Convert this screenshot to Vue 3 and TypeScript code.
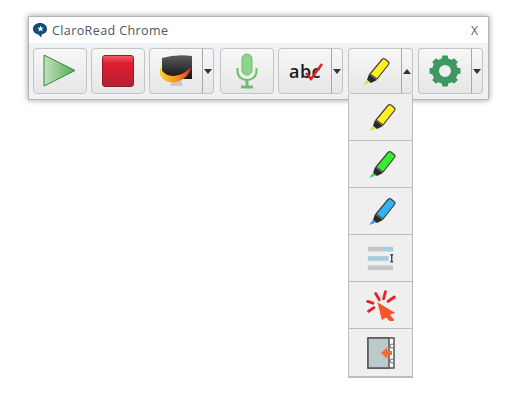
<script setup lang="ts">
const markers = [
  { id: 'y', body: '#ffee22', tip: '#e8dc30' },
  { id: 'g', body: '#33ee33', tip: '#44cc66' },
  { id: 'b', body: '#2db4f6', tip: '#2f9fe0' },
]
const gearTeeth = [0, 45, 90, 135, 180, 225, 270, 315]
const rays = [
  'M11 16 L17 18', 'M12 27 L18 23', 'M20 7 L24 14', 'M31 5 L29 13', 'M41 11 L34 16',
]
</script>

<template>
  <div class="page">
    <div class="panel">
      <div class="title">
        <svg class="logo" width="16" height="16" viewBox="0 0 16 16">
          <path d="M8 1 C12 1 15 3.500 15 7 C15 10 12.500 12 10 12 L9 15.500 L6.500 12.500 C3.500 12 1 10 1 7 C1 3.500 4 1 8 1Z" fill="#0d4f78" />
          <path d="M8.500 3.500 L9.400 5.700 L11.700 5.800 L9.900 7.200 L10.500 9.400 L8.500 8.200 L6.500 9.400 L7.100 7.200 L5.300 5.800 L7.600 5.700Z" fill="#fff" />
        </svg>
        <span class="name">ClaroRead Chrome</span>
        <span class="close">X</span>
      </div>
      <div class="bar">
        <button class="btn plain first">
          <svg width="36" height="36" viewBox="0 0 36 36">
            <defs>
              <linearGradient id="pl" x1="0" y1="0" x2="1" y2="0">
                <stop offset="0" stop-color="#c6e0c0" /><stop offset="1" stop-color="#4fae55" />
              </linearGradient>
            </defs>
            <path d="M2 2 L33 17.500 L2 33Z" fill="url(#pl)" stroke="#2f8a3c" stroke-width="1" />
          </svg>
        </button>
        <button class="btn plain stop-btn">
          <span class="stop"></span>
        </button>
        <div class="split screen-split">
          <button class="btn main">
            <svg width="34" height="34" viewBox="0 0 34 34">
              <defs>
                <linearGradient id="sw" x1="0" y1="0" x2="1" y2="0">
                  <stop offset="0" stop-color="#f6d22c" /><stop offset=".6" stop-color="#f58a1f" /><stop offset="1" stop-color="#d8321c" />
                </linearGradient>
                <linearGradient id="sc" x1="0" y1="0" x2="0" y2="1">
                  <stop offset="0" stop-color="#5c5c5c" /><stop offset="1" stop-color="#111" />
                </linearGradient>
              </defs>
              <path d="M11 32 h13 l-2 -6 h-9z" fill="#c8c8c8" />
              <path d="M3 4 Q17 0 33 2 V25 H9 L3 20Z" fill="url(#sc)" />
              <path d="M1 12 C4 24 20 26 32 13 C29 29 8 34 1 21Z" fill="url(#sw)" />
            </svg>
          </button>
          <button class="btn arrow"><i class="down"></i></button>
        </div>
        <button class="btn plain mic-btn">
          <svg width="24" height="38" viewBox="0 0 24 38">
            <rect x="7" y="2" width="10" height="21" rx="5" fill="#8ed48a" stroke="#6cbc6a" />
            <path d="M2.500 16 V19 C2.500 25 7 28 12 28 C17 28 21.500 25 21.500 19 V16" fill="none" stroke="#6cc06c" stroke-width="2" />
            <path d="M12 28 V34" stroke="#6cc06c" stroke-width="3" />
            <path d="M6 35 H18" stroke="#6cc06c" stroke-width="3" />
          </svg>
        </button>
        <div class="split abc-split">
          <button class="btn main abc">
            <span class="abc-text">abc</span>
            <svg class="tick" width="20" height="20" viewBox="0 0 20 20">
              <path d="M2 11 L7 17 L18 2" fill="none" stroke="#d8232f" stroke-width="2.500" />
            </svg>
          </button>
          <button class="btn arrow"><i class="down"></i></button>
        </div>
        <div class="split hl-split">
          <button class="btn main">
            <svg width="30" height="30" viewBox="0 0 30 30">
              <path d="M10 18 L22 3.500 Q23.500 2 25 3 L28.500 6 Q29.500 7 28.500 8.500 L17 23Z" fill="#ffee22" stroke="#44423a" stroke-width="1.200" />
              <path d="M9 18 L17 24 L11 27 L7 24Z" fill="#2a2a2a" />
              <path d="M7 24 L10 26.500 L3 29Z" fill="#e8dc30" />
            </svg>
          </button>
          <button class="btn arrow"><i class="up"></i></button>
          <div class="menu">
            <div v-for="m in markers" :key="m.id" class="item">
              <svg width="30" height="30" viewBox="0 0 30 30">
                <path d="M10 18 L22 3.500 Q23.500 2 25 3 L28.500 6 Q29.500 7 28.500 8.500 L17 23Z" :fill="m.body" stroke="#44423a" stroke-width="1.200" />
                <path d="M9 18 L17 24 L11 27 L7 24Z" fill="#2a2a2a" />
                <path d="M7 24 L10 26.500 L3 29Z" :fill="m.tip" />
              </svg>
            </div>
            <div class="item">
              <svg width="28" height="26" viewBox="0 0 30 26">
                <rect x="1" y="1" width="14" height="5" fill="#c6c6c6" />
                <rect x="15" y="1" width="13" height="5" fill="#a4cde2" />
                <rect x="1" y="11" width="22" height="5" fill="#a4cde2" />
                <rect x="1" y="21" width="27" height="5" fill="#c6c6c6" />
                <path d="M25 9.500 H28 M26.500 9.500 V17 M25 17 H28" stroke="#444" stroke-width="1.500" fill="none" />
              </svg>
            </div>
            <div class="item">
              <svg width="32" height="32" viewBox="8 2 36 36">
                <path v-for="r in rays" :key="r" :d="r" stroke="#ee2026" stroke-width="3.200" stroke-linecap="round" />
                <path d="M22 17 L42 29 L36 31 L41 37 L37 40 L32 34 L27 37Z" fill="#f0562a" />
              </svg>
            </div>
            <div class="item">
              <svg width="28" height="32" viewBox="0 0 28 32">
                <rect x="1" y="1" width="26" height="30" fill="#fff" stroke="#555" stroke-width="1.500" />
                <rect x="1" y="1" width="21" height="30" fill="#bccacc" stroke="#555" stroke-width="1.500" />
                <circle cx="25" cy="9" r="2" fill="#fff" stroke="#666" />
                <circle cx="25" cy="24" r="2" fill="#fff" stroke="#666" />
                <path d="M14 16 L20 10.500 V14 H25 V18 H20 V21.500Z" fill="#f26a35" />
              </svg>
            </div>
          </div>
        </div>
        <div class="split gear-split">
          <button class="btn main">
            <svg width="32" height="32" viewBox="0 0 32 32">
              <rect v-for="a in gearTeeth" :key="a" x="13" y="0.500" width="6" height="6" rx="1" fill="#3f9763" :transform="`rotate(${a} 16 16)`" />
              <circle cx="16" cy="16" r="9.500" fill="none" stroke="#3f9763" stroke-width="7" />
            </svg>
          </button>
          <button class="btn arrow"><i class="down"></i></button>
        </div>
      </div>
    </div>
  </div>
</template>

<style scoped>
.page {
  min-height: 414px;
  box-sizing: border-box;
  padding: 16px 0 0 28px;
  font-family: "Open Sans", "Liberation Sans", sans-serif;
}
.panel {
  width: 461px;
  height: 84px;
  box-sizing: border-box;
  border: 1px solid #b4b4b4;
  box-shadow: 0 0 6px rgba(0, 0, 0, 0.4);
  background: #eef2f4;
}
.title {
  height: 26px;
  background: #fff;
  display: flex;
  align-items: center;
  padding: 0 10px 0 3px;
  gap: 4px;
}
.logo { flex: none; }
.name {
  flex: 1;
  font-size: 12.5px;
  letter-spacing: 0.4px;
  color: #4a5560;
}
.close {
  font-size: 12px;
  color: #4a6078;
}
.bar {
  display: flex;
  padding-top: 5px;
  padding-left: 4px;
  align-items: flex-start;
}
.btn {
  height: 46px;
  padding: 0;
  margin: 0;
  box-sizing: border-box;
  border: 1px solid #c4c4c4;
  background: linear-gradient(#f7f7f7, #e6e6e6);
  display: flex;
  align-items: center;
  justify-content: center;
}
.plain {
  width: 54px;
  border-radius: 4px;
}
.stop-btn { margin-left: 4px; }
.mic-btn { margin-left: 6px; }
.stop {
  width: 32px;
  height: 32px;
  box-sizing: border-box;
  border: 1px solid #8c1c2c;
  border-radius: 3px;
  background: linear-gradient(#ee5a66, #dd1e30 25%, #b81f30);
}
.split {
  position: relative;
  display: flex;
}
.screen-split { margin-left: 4px; }
.abc-split { margin-left: 4px; }
.hl-split { margin-left: 5px; }
.gear-split { margin-left: 5px; }
.main {
  width: 53px;
  border-right: 0;
  border-radius: 4px 0 0 4px;
}
.arrow {
  width: 12px;
  border-left: 1px solid #a8a8a8;
  border-radius: 0 4px 4px 0;
}
.down {
  width: 0;
  height: 0;
  border-left: 4px solid transparent;
  border-right: 4px solid transparent;
  border-top: 5px solid #333;
}
.up {
  width: 0;
  height: 0;
  border-left: 4px solid transparent;
  border-right: 4px solid transparent;
  border-bottom: 5px solid #333;
}
.abc {
  position: relative;
}
.abc-text {
  font-family: "Open Sans", "Liberation Sans", sans-serif;
  font-weight: 600;
  font-size: 18px;
  color: #1c1c1c;
  letter-spacing: 0.5px;
}
.tick {
  position: absolute;
  left: 25px;
  top: 13px;
}
.menu {
  position: absolute;
  left: 0;
  top: 46px;
  width: 65px;
  box-sizing: border-box;
  border: 1px solid #bdbdbd;
  border-top: 0;
  background: #efefef;
  z-index: 2;
}
.item {
  height: 47px;
  box-sizing: border-box;
  border-bottom: 1px solid #bdbdbd;
  display: flex;
  align-items: center;
  justify-content: center;
}
.item:last-child { border-bottom: 0; height: 48px; border-bottom: 1px solid #bdbdbd; }
</style>
